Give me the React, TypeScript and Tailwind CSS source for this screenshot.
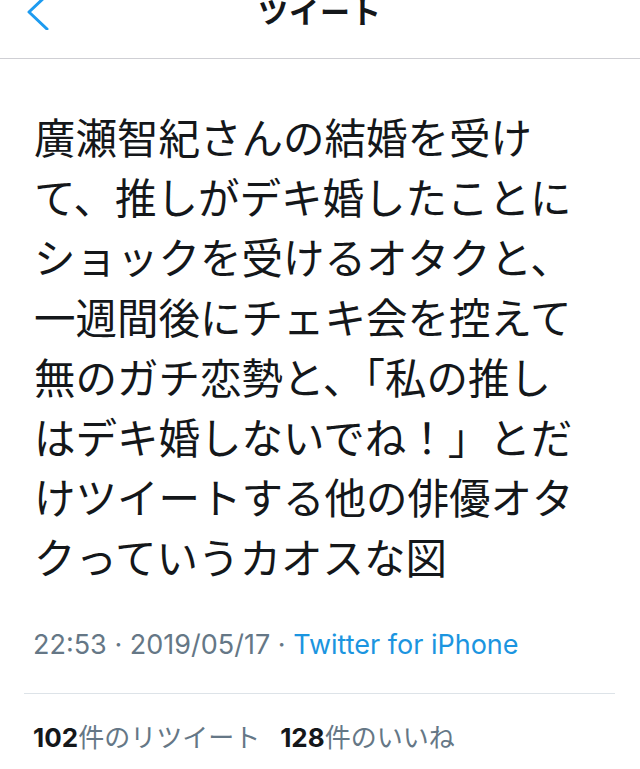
const lines = [
  "廣瀬智紀さんの結婚を受け",
  "て、推しがデキ婚したことに",
  "ショックを受けるオタクと、",
  "一週間後にチェキ会を控えて",
  "無のガチ恋勢と、「私の推し",
  "はデキ婚しないでね！」とだ",
  "けツイートする他の俳優オタ",
  "クっていうカオスな図",
];

function BackChevron() {
  return (
    <svg width="24" height="36" viewBox="0 0 24 36" fill="none" className="shrink-0">
      <polyline
        points="21,1 3,18 21,35"
        stroke="#1d9bf0"
        strokeWidth="3"
        strokeLinecap="round"
        strokeLinejoin="round"
      />
    </svg>
  );
}

export default function App() {
  return (
    <div
      className="w-[640px] h-[769px] overflow-hidden bg-white text-[#14171a]"
      style={{ fontFamily: "Inter, 'Noto Sans CJK JP', sans-serif" }}
    >
      {/* Header (partly scrolled off the top) */}
      <div className="h-[59px] border-b border-[#cfcfd4]">
        <div className="relative flex h-[24px] items-center justify-center">
          <div className="absolute left-[26px] top-[-6px]">
            <BackChevron />
          </div>
          <span className="text-[30px] font-bold leading-[24px] tracking-[1px]">ツイート</span>
        </div>
      </div>

      {/* Tweet body */}
      <div className="pt-[47px] pl-[34px]">
        <p
          className="text-[41.5px] leading-[60px] whitespace-nowrap"
          style={{ fontFamily: "'Noto Sans CJK JP', sans-serif" }}
        >
          {lines.map((l) => (
            <span key={l} className="block">
              {l}
            </span>
          ))}
        </p>
      </div>

      {/* Timestamp */}
      <div className="pl-[33px] pt-[41px] text-[27px] leading-[36px] text-[#657786]">
        22:53 · 2019/05/17 · <span className="text-[#1b95e0]">Twitter for iPhone</span>
      </div>

      <div className="ml-[24px] mr-[25px] mt-[30px] border-t border-[#dde3e8]" />

      {/* Counts */}
      <div className="pl-[33px] pt-[26px] text-[26px] leading-[36px] text-[#657786] flex gap-[20px]">
        <span>
          <span className="font-bold text-[#14171a]">102</span>件のリツイート
        </span>
        <span>
          <span className="font-bold text-[#14171a]">128</span>件のいいね
        </span>
      </div>
    </div>
  );
}
